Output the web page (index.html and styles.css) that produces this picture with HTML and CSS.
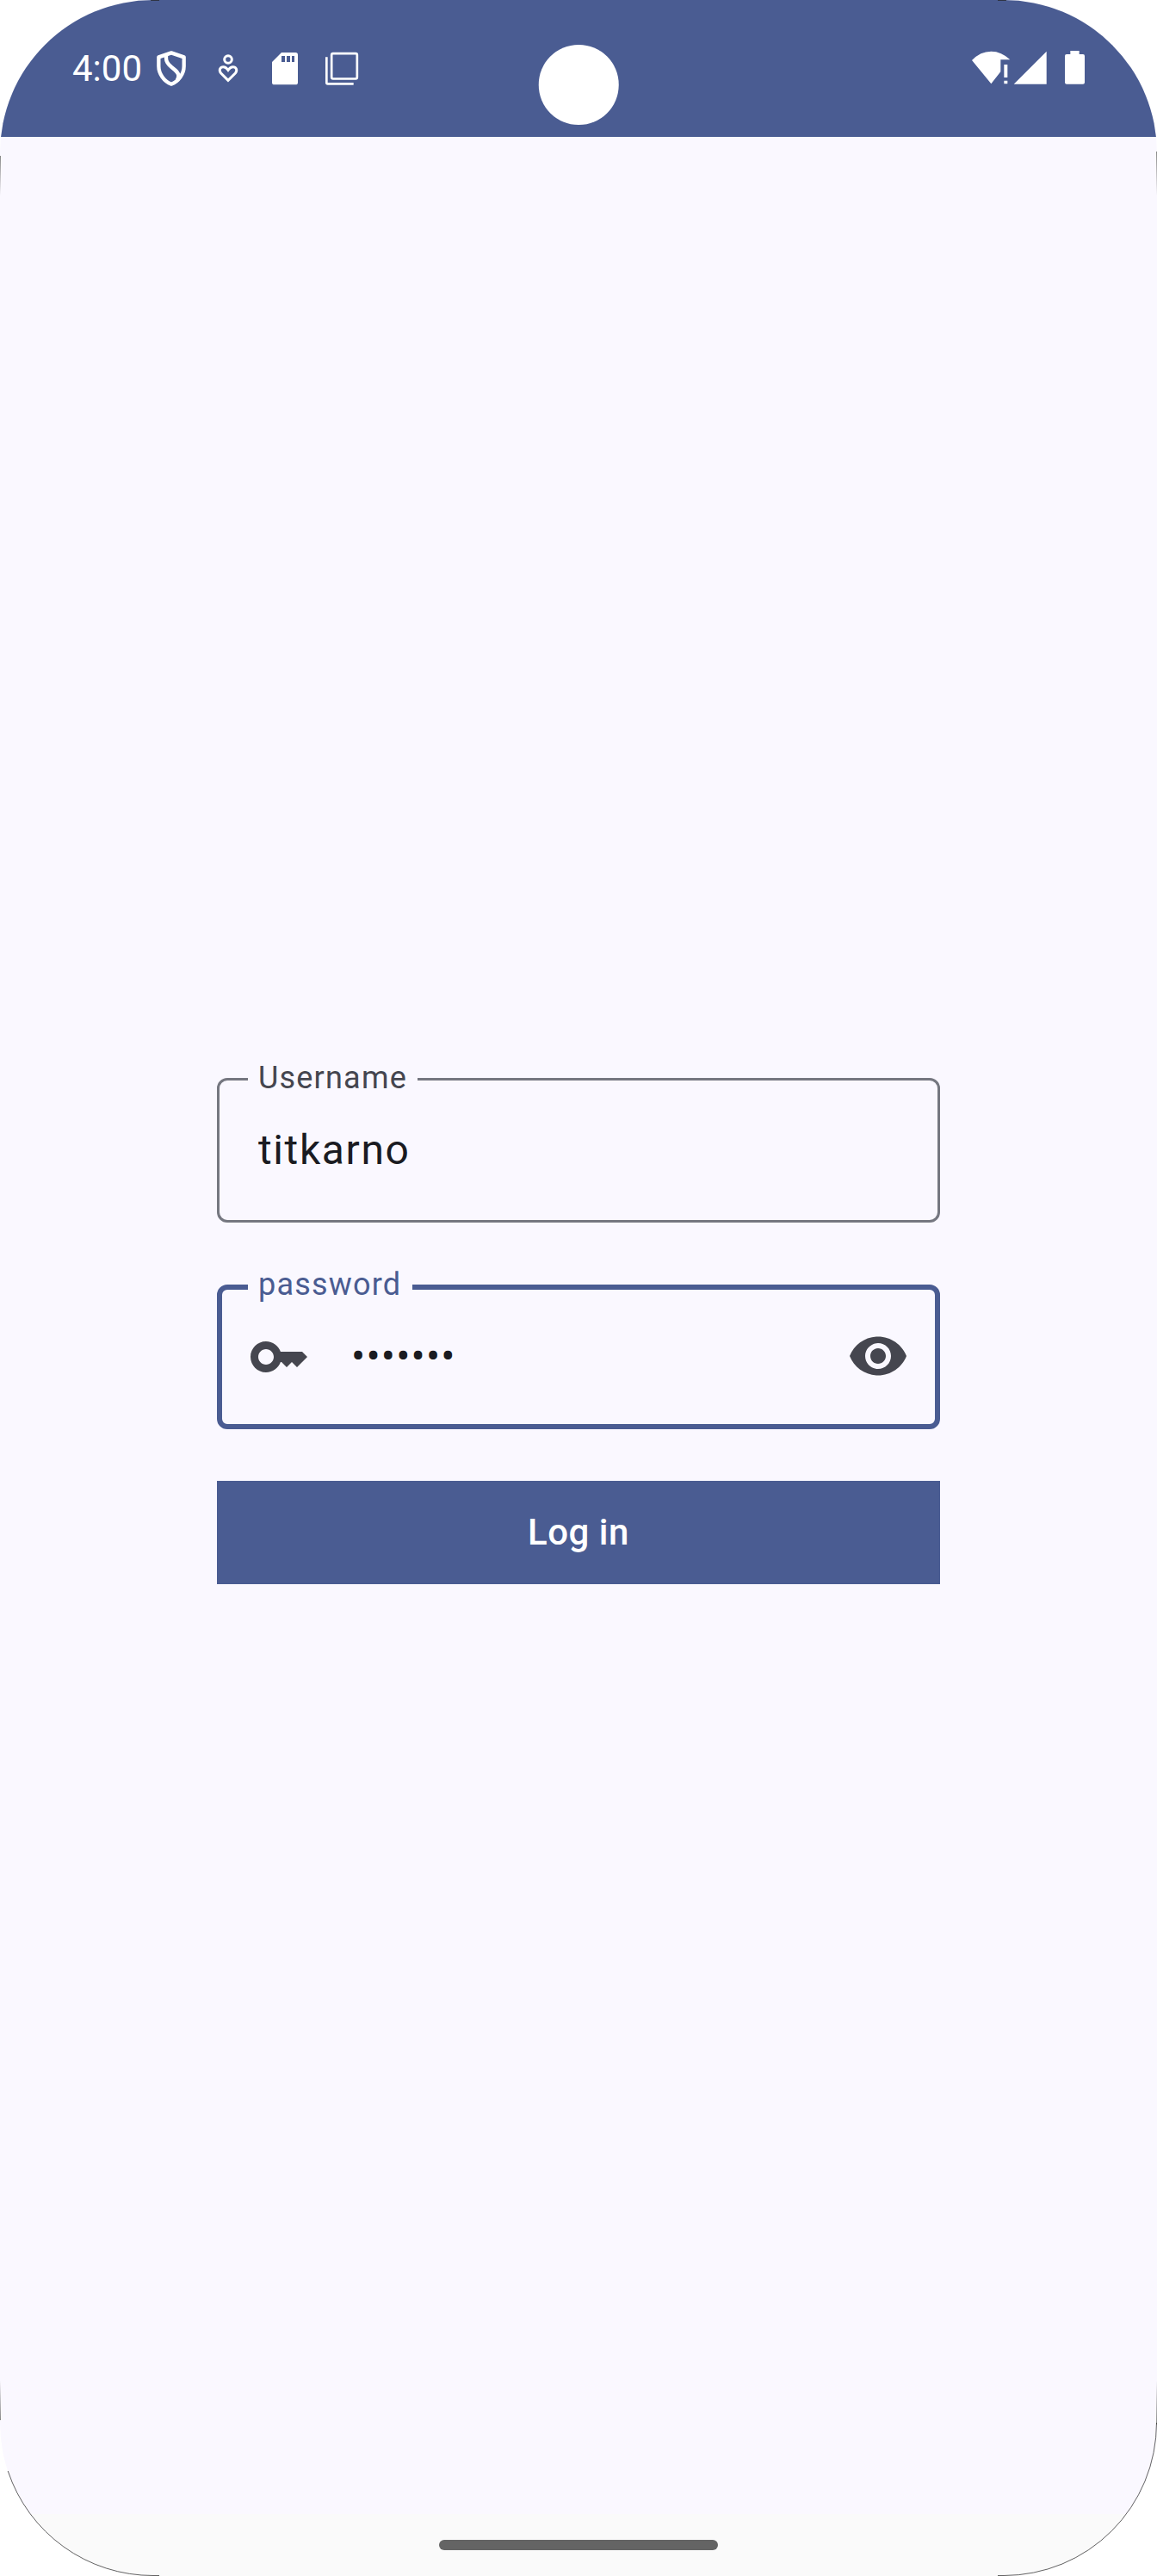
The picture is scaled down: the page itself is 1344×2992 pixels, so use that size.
FILE: index.html
```html
<!DOCTYPE html>
<html lang="en">
<head>
<meta charset="utf-8">
<title>Log in</title>
<link rel="stylesheet" href="styles.css">
</head>
<body>
<div class="screen">
  <header class="status">
    <div class="status-left">
      <span class="clock">4:00</span>
      <svg class="notice" viewBox="498 156 198 162" fill="none" stroke="#fff" stroke-width="13" stroke-linejoin="round">
        <path d="M597 184L553 199V231C553 257 572 284 597 293C622 284 641 257 641 231V199Z"/>
        <path d="M579 191V203C579 216 586 224 598 234C612 245 622 252 622 264C622 270 620 275 617 280"/>
      </svg>
      <svg class="notice" viewBox="696 156 198 162" fill="none" stroke="#fff" stroke-width="9">
        <circle cx="795" cy="207" r="13"/>
        <path d="M795 280L770 255C761 244 768 233 778 233C786 233 790 237 795 244C800 237 804 233 812 233C822 233 829 244 820 255Z"/>
      </svg>
      <svg class="notice" viewBox="894 156 198 162" fill="#fff" fill-rule="evenodd">
        <path d="M981 183H1030Q1038 183 1038 191V287Q1038 295 1030 295H956Q948 295 948 287V216ZM981 195V216H993V195ZM999 195V216H1011V195ZM1017 195V216H1026V195Z"/>
      </svg>
      <svg class="notice" viewBox="1092 156 198 162" fill="none" stroke="#fff" stroke-width="8">
        <rect x="1155.500" y="186.500" width="89" height="88" rx="5"/>
        <path d="M1138 199V288Q1138 292 1142 292H1232"/>
      </svg>
    </div>
    <div class="status-right">
      <svg class="wifi" viewBox="84 156 144 162" fill="#fff">
        <path d="M87 210Q116 179 154 179Q190 179 220 208H187V250L154 292Z"/>
        <path d="M199 225H211V270H199ZM199 281H211V292H199Z"/>
      </svg>
      <svg class="signal" viewBox="228 156 126 162" fill="#fff"><path d="M347 179V293H233Z"/></svg>
      <svg class="battery" viewBox="396 156 99 162" fill="#fff">
        <path d="M430 177H461V189H474Q480 189 480 195V287Q480 293 474 293H417Q411 293 411 287V195Q411 189 417 189H430Z"/>
      </svg>
    </div>
    <span class="camera"></span>
  </header>

  <main class="form">
    <div class="field">
      <label class="label">Username</label>
      <span class="value">titkarno</span>
    </div>
    <div class="field focused">
      <label class="label">password</label>
      <svg class="icon" viewBox="0 0 24 24"><path d="M21 10h-8.350C11.830 7.670 9.610 6 7 6c-3.310 0-6 2.690-6 6s2.690 6 6 6c2.610 0 4.830-1.670 5.650-4H13l2 2 2-2 2 2 4-4.040L21 10zM7 15c-1.650 0-3-1.350-3-3s1.350-3 3-3 3 1.350 3 3-1.350 3-3 3z"/></svg>
      <span class="value dots">•••••••</span>
      <svg class="icon eye" viewBox="0 0 24 24"><path d="M12 4.500C7 4.500 2.730 7.610 1 12c1.730 4.390 6 7.500 11 7.500s9.270-3.110 11-7.500c-1.730-4.390-6-7.500-11-7.500zM12 17c-2.760 0-5-2.240-5-5s2.240-5 5-5 5 2.240 5 5-2.240 5-5 5zm0-8c-1.660 0-3 1.340-3 3s1.340 3 3 3 3-1.340 3-3-1.340-3-3-3z"/></svg>
    </div>
    <button class="login">Log in</button>
  </main>

  <footer class="navbar"><span class="handle"></span></footer>
</div>
<svg class="bezel" viewBox="0 0 1344 2992" fill="none">
  <defs>
    <linearGradient id="down" x1="0" y1="0" x2="0" y2="1"><stop offset="0" stop-color="#888"/><stop offset="1" stop-color="#888" stop-opacity="0"/></linearGradient>
    <linearGradient id="up" x1="0" y1="1" x2="0" y2="0"><stop offset="0" stop-color="#888"/><stop offset="1" stop-color="#888" stop-opacity="0"/></linearGradient>
  </defs>
  <g fill="url(#down)"><rect y="181" width="1" height="46"/><rect x="1343" y="176" width="1" height="51"/></g>
  <g fill="url(#up)"><rect y="2765" width="1" height="46"/><rect x="1343" y="2765" width="1" height="51"/></g>
  <g stroke="#222" stroke-width="1" stroke-opacity=".7">
    <path d="M9.200 2870A177.500 177.500 0 0 0 178 2991.500H185M1343.500 2814A177.500 177.500 0 0 1 1166 2991.500H1159"/>
    <path d="M175 .5H185M1159 .5H1169"/>
  </g>
</svg>
</body>
</html>
```
FILE: styles.css
```css
body {
  margin: 0;
  background: #fff;
  font-family: Roboto, sans-serif;
}

.screen {
  display: flex;
  flex-direction: column;
  height: 2992px;
  overflow: hidden;
  border-radius: 178px;
  background: #faf8ff;
}

.status {
  position: relative;
  display: flex;
  justify-content: space-between;
  box-sizing: border-box;
  height: 159px;
  padding: 52px 79px 0 84px;
  background: #4a5c92;
  color: #fff;
}

.status-left,
.status-right {
  display: flex;
  height: 54px;
}

.clock {
  width: 82px;
  font-size: 42px;
  line-height: 55px;
}

.notice {
  width: 66px;
  height: 54px;
}

.wifi { width: 48px; }
.signal { width: 42px; }

.battery {
  width: 33px;
  margin-left: 14px;
}

.camera {
  position: absolute;
  top: 52px;
  left: 50%;
  width: 92.500px;
  height: 92.500px;
  border-radius: 50%;
  background: #fff;
  transform: translateX(-50%);
}

.form {
  display: flex;
  flex: 1;
  flex-direction: column;
  align-items: center;
  padding-top: 1093px;
}

.field {
  position: relative;
  display: flex;
  align-items: center;
  box-sizing: border-box;
  width: 840px;
  height: 168px;
  margin-bottom: 72px;
  padding: 0 45px;
  border: 3px solid #757780;
  border-radius: 12px;
}

.label {
  position: absolute;
  top: -27px;
  left: 33px;
  padding: 0 12px;
  background: #faf8ff;
  color: #45464f;
  font-size: 36px;
  line-height: 48px;
  letter-spacing: 1.200px;
}

.value {
  color: #1a1b21;
  font-size: 48px;
  line-height: 72px;
  letter-spacing: 1.600px;
}

.dots {
  letter-spacing: 1.200px;
}

.focused {
  gap: 48px;
  margin-bottom: 60px;
  padding: 0 30px;
  border: 6px solid #4a5c92;
}

.focused .label {
  top: -30px;
  left: 30px;
  padding-right: 13px;
  color: #4a5c92;
}

.icon {
  width: 72px;
  height: 72px;
  fill: #45464f;
}

.eye {
  margin: 0 0 3px auto;
}

.login {
  width: 840px;
  height: 120px;
  padding: 0;
  border: 0;
  background: #4a5c92;
  color: #fff;
  font: 500 42px/60px Roboto, sans-serif;
  letter-spacing: .5px;
}

.navbar {
  display: flex;
  justify-content: center;
  box-sizing: border-box;
  height: 72px;
  padding-top: 30px;
  background: #fafafa;
}

.handle {
  width: 324px;
  height: 12px;
  /* the handle sits between x = 510 and x = 834 */
  border-radius: 6px;
  background: #646464;
}

.bezel {
  position: absolute;
  top: 0;
  left: 0;
  width: 1344px;
  height: 2992px;
  pointer-events: none;
}
```
